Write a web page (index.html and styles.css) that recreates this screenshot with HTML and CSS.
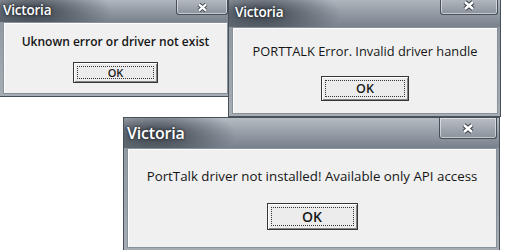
FILE: index.html
```html
<!DOCTYPE html>
<html lang="en">
<head>
  <meta charset="UTF-8">
  <title>Victoria errors</title>
  <link rel="stylesheet" href="styles.css">
</head>
<body>
  <div class="desktop">
    <div class="window win-unknown">
      <div class="titlebar">
        <span class="title">Victoria</span>
        <span class="close">
          <svg viewBox="0 0 14 10"><path class="x-shadow" d="M3 1.5 L11 8.5 M11 1.5 L3 8.5"/><path class="x-mark" d="M3 1.5 L11 8.5 M11 1.5 L3 8.5"/></svg>
        </span>
      </div>
      <div class="panel">
        <p class="message">Uknown error or driver not exist</p>
        <button class="btn"><span class="focus">OK</span></button>
      </div>
    </div>

    <div class="window win-handle">
      <div class="titlebar">
        <span class="title">Victoria</span>
        <span class="close">
          <svg viewBox="0 0 14 10"><path class="x-shadow" d="M3 1.5 L11 8.5 M11 1.5 L3 8.5"/><path class="x-mark" d="M3 1.5 L11 8.5 M11 1.5 L3 8.5"/></svg>
        </span>
      </div>
      <div class="panel">
        <p class="message">PORTTALK Error. Invalid driver handle</p>
        <button class="btn"><span class="focus">OK</span></button>
      </div>
    </div>

    <div class="window win-portalk">
      <div class="titlebar">
        <span class="title">Victoria</span>
        <span class="close">
          <svg viewBox="0 0 14 10"><path class="x-shadow" d="M3 1.5 L11 8.5 M11 1.5 L3 8.5"/><path class="x-mark" d="M3 1.5 L11 8.5 M11 1.5 L3 8.5"/></svg>
        </span>
      </div>
      <div class="panel">
        <p class="message">PortTalk driver not installed! Available only API access</p>
        <button class="btn"><span class="focus">OK</span></button>
      </div>
    </div>
  </div>
</body>
</html>
```

FILE: styles.css
```css
body, html {
  margin: 0;
  padding: 0;
  background-color: #fff;
  font-family: "Open Sans", "DejaVu Sans", sans-serif;
}
.desktop {
  position: relative;
  width: 509px;
  height: 250px;
  overflow: hidden;
  background-color: #fff;
}

/* each window is placed on the desktop, the inside is plain flow */
.window {
  position: absolute;
  display: flex;
  flex-direction: column;
  box-sizing: border-box;
  border: 1px solid #48505a;
  background: linear-gradient(to bottom, #8a929c, #a6adb5);
}
.win-unknown {
  left: -1px;
  top: -3px;
  width: 232px;
  height: 100px;
  --title-h: 24px;
  --title-size: 13.5px;
  --close-w: 52px;
  --close-h: 17px;
}
.win-handle {
  left: 228px;
  top: -4px;
  width: 273px;
  height: 121px;
  --title-h: 30px;
  --title-size: 13.5px;
  --close-w: 58px;
  --close-h: 18px;
}
.win-portalk {
  left: 123px;
  top: 117px;
  width: 377px;
  height: 134px;
  --title-h: 30px;
  --title-size: 16px;
  --close-w: 58px;
  --close-h: 21px;
}

.titlebar {
  flex: none;
  height: var(--title-h);
  display: flex;
  align-items: center;
  justify-content: space-between;
  padding-left: 3px;
  background:
    radial-gradient(ellipse 80px 28px at 32px 55%, rgba(48, 55, 64, 0.9), rgba(48, 55, 64, 0)),
    linear-gradient(to bottom, #b5bbc2, #929aa3 55%, #78818c);
}
.win-handle .titlebar {
  padding-left: 6px;
}
.title {
  color: #fff;
  font-size: var(--title-size);
  font-weight: 600;
  letter-spacing: -0.2px;
  text-shadow: 0 0 3px #2a3038, 0 0 2px #2a3038;
}
.close {
  align-self: flex-start;
  box-sizing: border-box;
  width: var(--close-w);
  height: var(--close-h);
  margin-right: 2px;
  display: flex;
  align-items: center;
  justify-content: center;
  border: 1px solid #474f59;
  border-top: none;
  border-radius: 0 0 3px 3px;
  background: linear-gradient(to bottom, #b8bec4, #8a929b);
  box-shadow: inset 0 0 0 1px rgba(255, 255, 255, 0.5);
}
.close svg {
  width: 14px;
  height: 11px;
}
.win-unknown .close svg {
  width: 13px;
  height: 9px;
  margin-top: 3px;
}
.x-shadow {
  fill: none;
  stroke: #363d46;
  stroke-width: 4.4;
}
.x-mark {
  fill: none;
  stroke: #fff;
  stroke-width: 2.5;
}

.panel {
  flex: 1;
  margin: 0 2px 2px 3px;
  display: flex;
  flex-direction: column;
  align-items: center;
  border: 1px solid #88909a;
  box-shadow: inset 1px 1px #fff;
  background-color: #f0f0f0;
}
.message {
  margin: 0;
  color: #161616;
  white-space: nowrap;
}
.win-unknown .message {
  padding-top: 11px;
  font-size: 12px;
  font-weight: 600;
  line-height: 16px;
}
.win-handle .message {
  padding-top: 15px;
  font-size: 12.8px;
  line-height: 16px;
}
.win-portalk .message {
  padding-top: 18px;
  font-size: 13.3px;
  line-height: 18px;
}

.btn {
  box-sizing: border-box;
  padding: 3px;
  border: 1px solid #363636;
  background-color: #ececec;
  box-shadow: inset 1px 1px #fff, inset -1px -1px #858585;
  font-family: inherit;
  font-weight: 600;
  color: #1a1a1a;
}
.focus {
  display: flex;
  align-items: center;
  justify-content: center;
  height: 100%;
  border: 1px dotted #333;
  box-sizing: border-box;
}
.win-unknown .btn {
  margin-top: 12px;
  width: 85px;
  height: 21px;
  font-size: 11px;
}
.win-handle .btn {
  margin-top: 17px;
  width: 88px;
  height: 25px;
  font-size: 12.5px;
}
.win-portalk .btn {
  margin-top: 18px;
  width: 91px;
  height: 27px;
  font-size: 14px;
}
```
